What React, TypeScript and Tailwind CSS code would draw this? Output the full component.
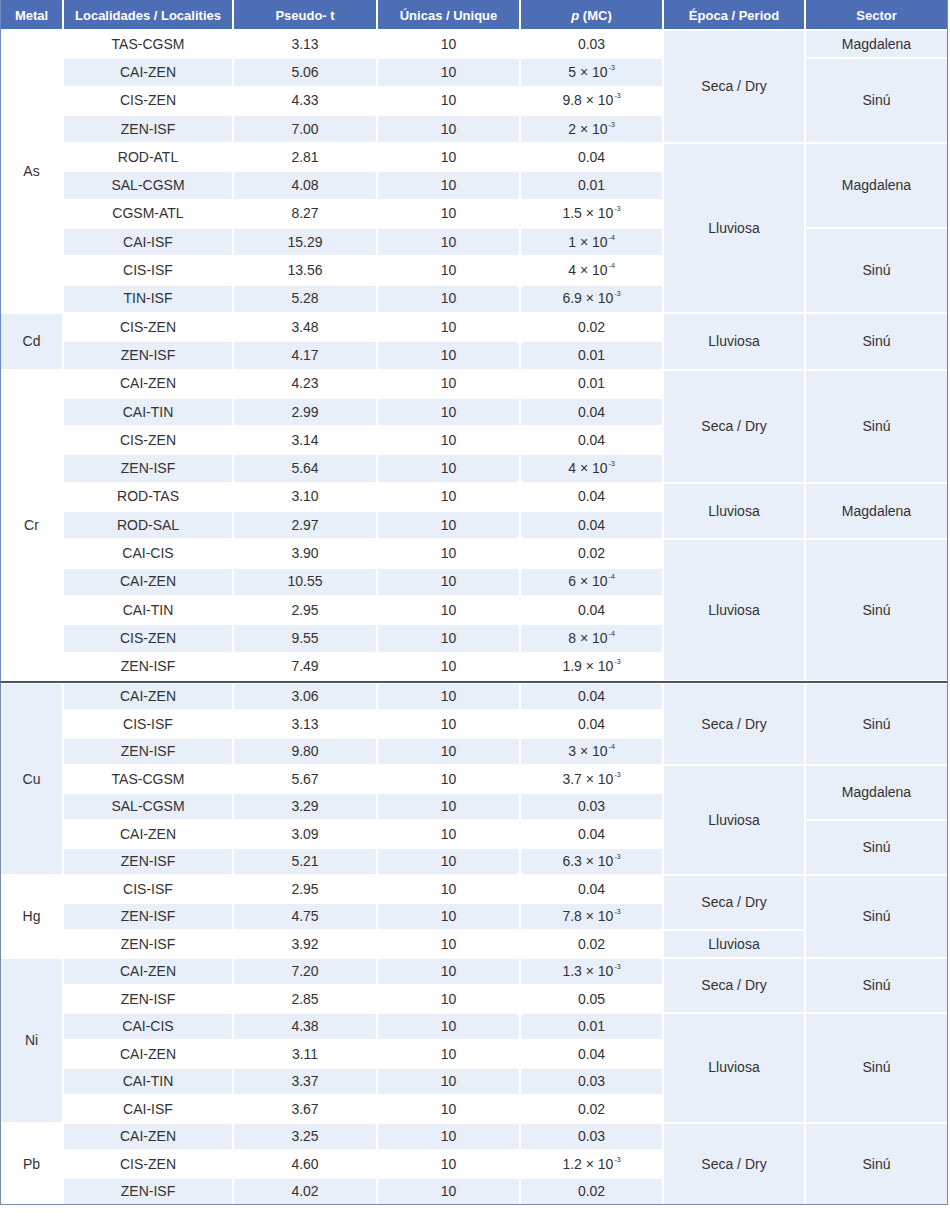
import React from "react";

type PVal = string | [string, string];

type Group = {
  metal: string;
  shaded: boolean;
  rows: [string, string, PVal][];
  epoca: [string, number][];
  sector: [string, number][];
};

const spanClass: Record<number, string> = {
  1: "row-span-1",
  2: "row-span-2",
  3: "row-span-3",
  4: "row-span-4",
  5: "row-span-5",
  6: "row-span-6",
  7: "row-span-7",
  10: "row-span-10",
  11: "row-span-11",
};

const SECA = "Seca / Dry";
const LLUV = "Lluviosa";

const topGroups: Group[] = [
  {
    metal: "As",
    shaded: false,
    rows: [
      ["TAS-CGSM", "3.13", "0.03"],
      ["CAI-ZEN", "5.06", ["5", "-3"]],
      ["CIS-ZEN", "4.33", ["9.8", "-3"]],
      ["ZEN-ISF", "7.00", ["2", "-3"]],
      ["ROD-ATL", "2.81", "0.04"],
      ["SAL-CGSM", "4.08", "0.01"],
      ["CGSM-ATL", "8.27", ["1.5", "-3"]],
      ["CAI-ISF", "15.29", ["1", "-4"]],
      ["CIS-ISF", "13.56", ["4", "-4"]],
      ["TIN-ISF", "5.28", ["6.9", "-3"]],
    ],
    epoca: [
      [SECA, 4],
      [LLUV, 6],
    ],
    sector: [
      ["Magdalena", 1],
      ["Sinú", 3],
      ["Magdalena", 3],
      ["Sinú", 3],
    ],
  },
  {
    metal: "Cd",
    shaded: true,
    rows: [
      ["CIS-ZEN", "3.48", "0.02"],
      ["ZEN-ISF", "4.17", "0.01"],
    ],
    epoca: [[LLUV, 2]],
    sector: [["Sinú", 2]],
  },
  {
    metal: "Cr",
    shaded: false,
    rows: [
      ["CAI-ZEN", "4.23", "0.01"],
      ["CAI-TIN", "2.99", "0.04"],
      ["CIS-ZEN", "3.14", "0.04"],
      ["ZEN-ISF", "5.64", ["4", "-3"]],
      ["ROD-TAS", "3.10", "0.04"],
      ["ROD-SAL", "2.97", "0.04"],
      ["CAI-CIS", "3.90", "0.02"],
      ["CAI-ZEN", "10.55", ["6", "-4"]],
      ["CAI-TIN", "2.95", "0.04"],
      ["CIS-ZEN", "9.55", ["8", "-4"]],
      ["ZEN-ISF", "7.49", ["1.9", "-3"]],
    ],
    epoca: [
      [SECA, 4],
      [LLUV, 2],
      [LLUV, 5],
    ],
    sector: [
      ["Sinú", 4],
      ["Magdalena", 2],
      ["Sinú", 5],
    ],
  },
];

const bottomGroups: Group[] = [
  {
    metal: "Cu",
    shaded: true,
    rows: [
      ["CAI-ZEN", "3.06", "0.04"],
      ["CIS-ISF", "3.13", "0.04"],
      ["ZEN-ISF", "9.80", ["3", "-4"]],
      ["TAS-CGSM", "5.67", ["3.7", "-3"]],
      ["SAL-CGSM", "3.29", "0.03"],
      ["CAI-ZEN", "3.09", "0.04"],
      ["ZEN-ISF", "5.21", ["6.3", "-3"]],
    ],
    epoca: [
      [SECA, 3],
      [LLUV, 4],
    ],
    sector: [
      ["Sinú", 3],
      ["Magdalena", 2],
      ["Sinú", 2],
    ],
  },
  {
    metal: "Hg",
    shaded: false,
    rows: [
      ["CIS-ISF", "2.95", "0.04"],
      ["ZEN-ISF", "4.75", ["7.8", "-3"]],
      ["ZEN-ISF", "3.92", "0.02"],
    ],
    epoca: [
      [SECA, 2],
      [LLUV, 1],
    ],
    sector: [["Sinú", 3]],
  },
  {
    metal: "Ni",
    shaded: true,
    rows: [
      ["CAI-ZEN", "7.20", ["1.3", "-3"]],
      ["ZEN-ISF", "2.85", "0.05"],
      ["CAI-CIS", "4.38", "0.01"],
      ["CAI-ZEN", "3.11", "0.04"],
      ["CAI-TIN", "3.37", "0.03"],
      ["CAI-ISF", "3.67", "0.02"],
    ],
    epoca: [
      [SECA, 2],
      [LLUV, 4],
    ],
    sector: [
      ["Sinú", 2],
      ["Sinú", 4],
    ],
  },
  {
    metal: "Pb",
    shaded: false,
    rows: [
      ["CAI-ZEN", "3.25", "0.03"],
      ["CIS-ZEN", "4.60", ["1.2", "-3"]],
      ["ZEN-ISF", "4.02", "0.02"],
    ],
    epoca: [[SECA, 3]],
    sector: [["Sinú", 3]],
  },
];

const cell = "flex items-center justify-center";
const tint = "bg-[#e8eff9]";
const head = "flex items-center justify-center pt-[3px] bg-[#4d6db5] text-[13px] font-bold text-white";

function PValue({ v }: { v: PVal }) {
  if (typeof v === "string") return <>{v}</>;
  return (
    <>
      {v[0]} × 10
      <span className="relative -top-[5px] ml-[1px] text-[7px] leading-none">{v[1]}</span>
    </>
  );
}

// starting offset of each merged block inside a group
function starts(spans: [string, number][]) {
  const m = new Map<number, [string, number]>();
  let i = 0;
  spans.forEach((s) => {
    m.set(i, s);
    i += s[1];
  });
  return m;
}

function buildCells(groups: Group[], first: number) {
  const cells: React.ReactNode[] = [];
  let r = first;
  groups.forEach((g, gi) => {
    const ep = starts(g.epoca);
    const se = starts(g.sector);
    g.rows.forEach(([loc, t, p], i) => {
      const stripe = r % 2 === 1 ? tint : "bg-white";
      if (i === 0) {
        cells.push(
          <div
            key={`m${gi}`}
            className={`${cell} ${spanClass[g.rows.length]} ${g.shaded ? tint : "bg-white"}`}
          >
            {g.metal}
          </div>
        );
      }
      cells.push(
        <div key={`l${r}`} className={`${cell} ${stripe}`}>{loc}</div>,
        <div key={`t${r}`} className={`${cell} ${stripe}`}>{t}</div>,
        <div key={`u${r}`} className={`${cell} ${stripe}`}>10</div>,
        <div key={`p${r}`} className={`${cell} ${stripe}`}>
          <PValue v={p} />
        </div>
      );
      const e = ep.get(i);
      if (e) {
        cells.push(
          <div key={`e${r}`} className={`${cell} ${spanClass[e[1]]} ${tint}`}>{e[0]}</div>
        );
      }
      const s = se.get(i);
      if (s) {
        cells.push(
          <div key={`s${r}`} className={`${cell} ${spanClass[s[1]]} ${tint}`}>{s[0]}</div>
        );
      }
      r++;
    });
  });
  return cells;
}

const cols = "grid-cols-[61px_168px_142px_141px_141px_140px_141px]";

export default function App() {
  const headers = ["Metal", "Localidades / Localities", "Pseudo- t", "Únicas / Unique"];
  return (
    <div className="min-h-[1218px] w-[950px] bg-white font-['Liberation_Sans',Arial,sans-serif] text-[14px] text-[#333333]">
      <div className="w-[948px] border-x border-b-2 border-x-[#6f88bf] border-b-[#4b5566] pb-[1px]">
        <div className={`grid ${cols} grid-rows-[29px_repeat(23,26.3px)] gap-x-[2px] gap-y-[2px] bg-white`}>
          {headers.map((h) => (
            <div key={h} className={head}>
              {h}
            </div>
          ))}
          <div className={head}>
            <span className="italic">p</span>&nbsp;(MC)
          </div>
          <div className={head}>Época / Period</div>
          <div className={head}>Sector</div>
          {buildCells(topGroups, 0)}
        </div>
      </div>
      <div className="w-[948px] border-x border-b border-[#7d8ca6] pt-[1px]">
        <div className={`grid ${cols} auto-rows-[25.5px] gap-x-[2px] gap-y-[2px] bg-white`}>
          {buildCells(bottomGroups, 23)}
        </div>
      </div>
    </div>
  );
}
